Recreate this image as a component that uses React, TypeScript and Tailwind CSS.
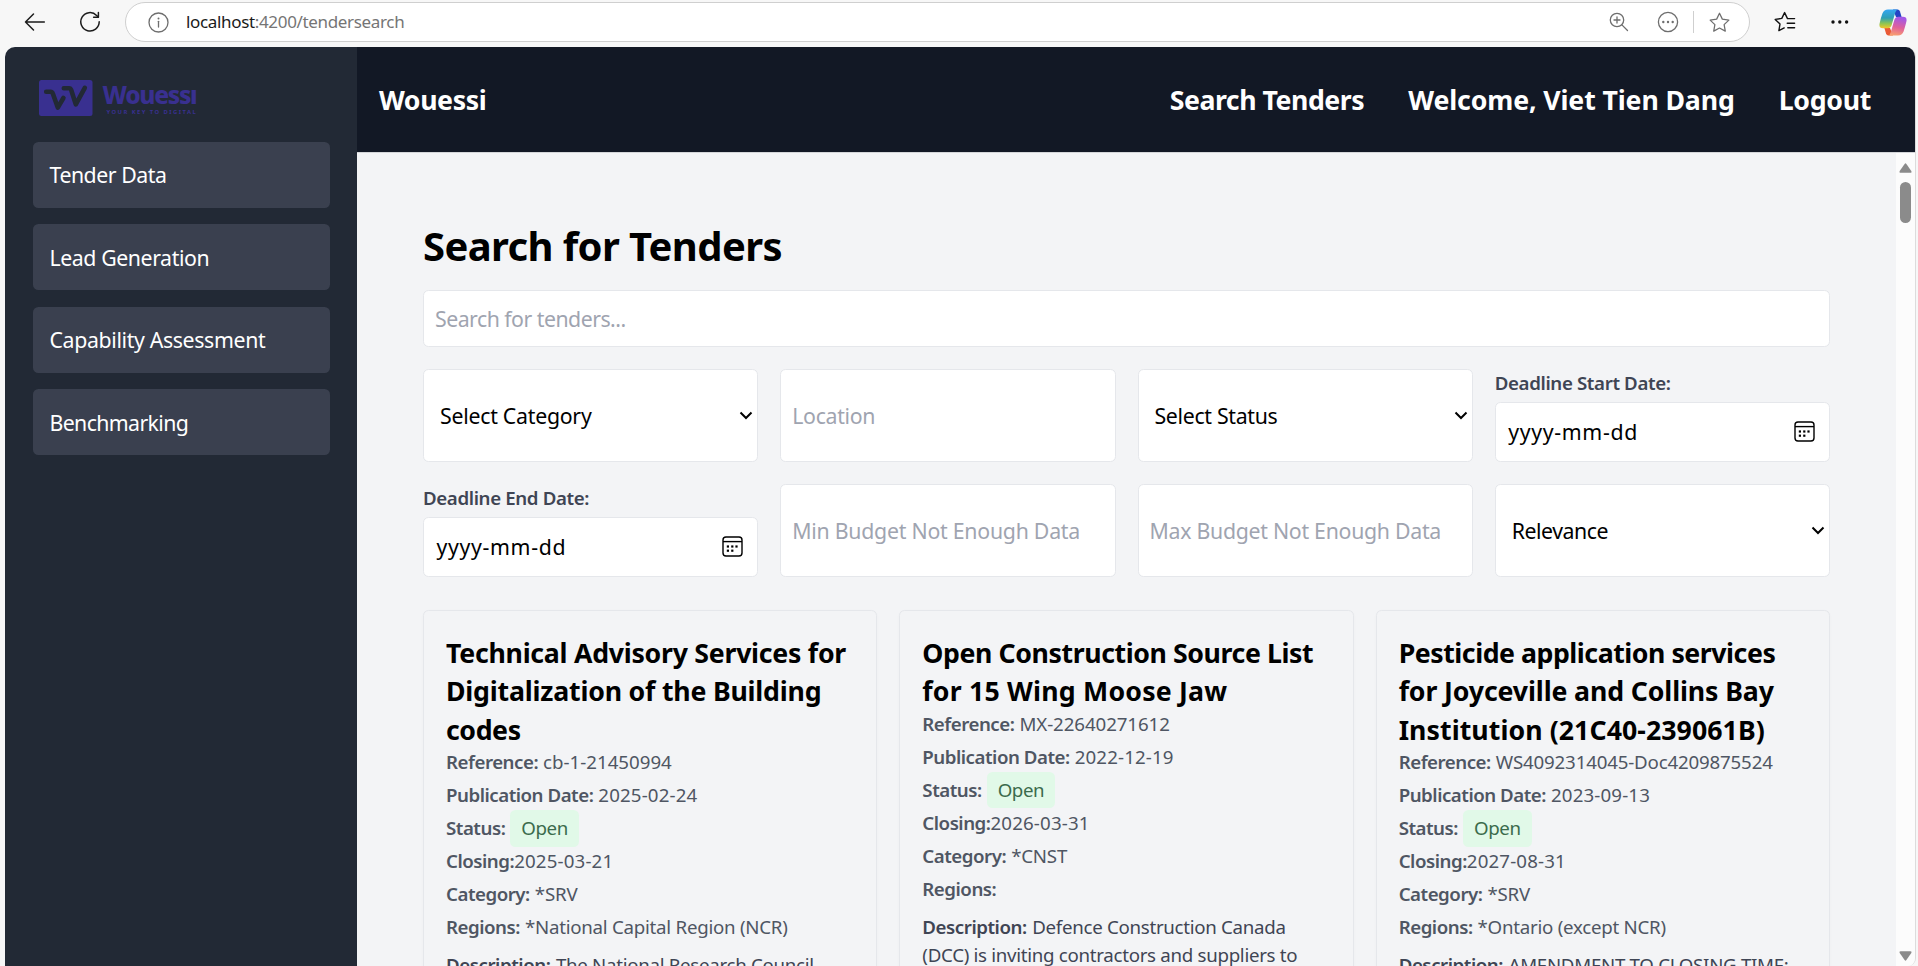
import type { ReactNode } from "react";

type Tender = {
  title: { text: string; tracking: string }[];
  reference: string;
  referenceTracking: string;
  published: string;
  closing: string;
  category: string;
  regions: string;
  description: string[];
};

const tenders: Tender[] = [
  {
    title: [
      { text: "Technical Advisory Services for", tracking: "tracking-[-0.26px]" },
      { text: "Digitalization of the Building", tracking: "tracking-[-0.2px]" },
      { text: "codes", tracking: "tracking-[-0.4px]" },
    ],
    reference: "cb-1-21450994",
    referenceTracking: "tracking-[0px]",
    published: "2025-02-24",
    closing: "2025-03-21",
    category: "*SRV",
    regions: "*National Capital Region (NCR)",
    description: ["The National Research Council"],
  },
  {
    title: [
      { text: "Open Construction Source List", tracking: "tracking-[-0.4px]" },
      { text: "for 15 Wing Moose Jaw", tracking: "tracking-[0.2px]" },
    ],
    reference: "MX-22640271612",
    referenceTracking: "tracking-[-0.08px]",
    published: "2022-12-19",
    closing: "2026-03-31",
    category: "*CNST",
    regions: "",
    description: ["Defence Construction Canada", "(DCC) is inviting contractors and suppliers to"],
  },
  {
    title: [
      { text: "Pesticide application services", tracking: "tracking-[-0.46px]" },
      { text: "for Joyceville and Collins Bay", tracking: "tracking-[-0.12px]" },
      { text: "Institution (21C40-239061B)", tracking: "tracking-[0.07px]" },
    ],
    reference: "WS4092314045-Doc4209875524",
    referenceTracking: "tracking-[-0.17px]",
    published: "2023-09-13",
    closing: "2027-08-31",
    category: "*SRV",
    regions: "*Ontario (except NCR)",
    description: ["AMENDMENT TO CLOSING TIME:"],
  },
];

const navItems = [
  { label: "Tender Data", tracking: "tracking-[-0.47px]" },
  { label: "Lead Generation", tracking: "tracking-[-0.42px]" },
  { label: "Capability Assessment", tracking: "tracking-[-0.36px]" },
  { label: "Benchmarking", tracking: "tracking-[-0.62px]" },
];

const STAR = "M10 1.2 12.7 6.8 18.9 7.7 14.4 12 15.5 18.2 10 15.3 4.5 18.2 5.6 12 1.1 7.7 7.3 6.8Z";

function BrowserBar() {
  return (
    <div className="flex h-[47px] shrink-0 items-start pt-[2px]">
      <svg className="mt-[9.5px] ml-[24px] h-[20px] w-[22px]" viewBox="0 0 22 20" fill="none" stroke="#1b1b1b" strokeWidth="1.5" strokeLinecap="round" strokeLinejoin="round">
        <path d="M20.3 10H1.5M9.5 2 1.5 10 9.5 18" />
      </svg>
      <svg className="mt-[9px] ml-[33px] h-[22px] w-[22px]" viewBox="0 0 22 22" fill="none" stroke="#1b1b1b" strokeWidth="1.5" strokeLinecap="round" strokeLinejoin="round">
        <path d="M20.2 10.8A9.2 9.2 0 1 1 17.6 4.4L19.2 6" />
        <path d="M19.4 1.6V6.2H14.6" />
      </svg>
      <div className="ml-[24px] flex h-[40px] w-[1625px] items-center rounded-full border border-[#cfcfcf] bg-white">
        <svg className="ml-[22px] h-[21px] w-[21px]" viewBox="0 0 21 21" fill="none" stroke="#6e6e6e" strokeWidth="1.3">
          <circle cx="10.5" cy="10.5" r="9.5" />
          <path d="M10.5 9.3V15" strokeLinecap="round" />
          <circle cx="10.5" cy="6.4" r="1" fill="#6e6e6e" stroke="none" />
        </svg>
        <span className="ml-[17px] text-[17px] tracking-[-0.34px] text-[#757575]">
          <span className="text-[#1a1a1a]">localhost</span>:4200/tendersearch
        </span>
        <div className="ml-auto flex items-center">
          <svg className="h-[20px] w-[20px]" viewBox="0 0 20 20" fill="none" stroke="#6e6e6e" strokeWidth="1.3" strokeLinecap="round">
            <circle cx="8" cy="8" r="6.7" />
            <path d="M12.9 12.9 18.5 18.5M8 5V11M5 8H11" />
          </svg>
          <svg className="ml-[28px] h-[22px] w-[22px]" viewBox="0 0 22 22" fill="none" stroke="#6e6e6e" strokeWidth="1.3">
            <circle cx="11" cy="11" r="9.6" />
            <g fill="#6e6e6e" stroke="none">
              <circle cx="6.3" cy="11" r="1.2" />
              <circle cx="11" cy="11" r="1.2" />
              <circle cx="15.7" cy="11" r="1.2" />
            </g>
          </svg>
          <div className="ml-[14px] h-[22px] w-px bg-[#cfcfcf]" />
          <svg className="ml-[15px] mr-[19px] h-[21px] w-[21px]" viewBox="0 0 20 20" fill="none" stroke="#6e6e6e" strokeWidth="1.2" strokeLinejoin="round">
            <path d={STAR} />
          </svg>
        </div>
      </div>
      <svg className="mt-[9px] ml-[24px] h-[22px] w-[22px]" viewBox="0 0 22 22" fill="none" stroke="#111" strokeWidth="1.4" strokeLinecap="round" strokeLinejoin="round">
        <path d="M13.5 7.6 10.6 1.6 7.8 7.4 1.2 8.4 6 13 4.9 19.6 10.2 16.9M13.5 7.6H20.6M13.2 12.2H20.6M13.8 16.7H20.6" />
      </svg>
      <svg className="mt-[17px] ml-[35px] h-[6px] w-[18px]" viewBox="0 0 18 6" fill="#111">
        <circle cx="2" cy="3" r="1.7" />
        <circle cx="8.8" cy="3" r="1.7" />
        <circle cx="15.6" cy="3" r="1.7" />
      </svg>
      <svg className="mt-[6.5px] ml-[30px] h-[27px] w-[28px]" viewBox="0 0 28 27">
        <defs>
          <linearGradient id="cpLeft" x1="0" y1="0" x2="0" y2="1">
            <stop offset="0" stopColor="#35a6f2" />
            <stop offset="0.45" stopColor="#2f9fb5" />
            <stop offset="0.75" stopColor="#8fc552" />
            <stop offset="1" stopColor="#f3c62a" />
          </linearGradient>
          <linearGradient id="cpRight" x1="0.3" y1="0" x2="0.1" y2="1">
            <stop offset="0" stopColor="#a458e6" />
            <stop offset="0.5" stopColor="#e0609b" />
            <stop offset="1" stopColor="#fba66a" />
          </linearGradient>
        </defs>
        <path d="M14 0.5H18.5Q20.4 0.5 21 2.4L22.6 8H17Z" fill="#2443c4" />
        <path d="M14 26.5H9.5Q7.6 26.5 7 24.6L5.4 19H11Z" fill="#ea5a36" />
        <path d="M9 0.5H19Q17 0.8 16.2 3.8L12.6 16.2Q11.6 19.2 8.6 19.2H4Q-0.4 19.2 0.6 14.4Q1.7 9.4 3.4 4.6Q5 0.5 9 0.5Z" fill="url(#cpLeft)" />
        <path d="M19 26.5H9Q11 26.2 11.8 23.2L15.4 10.8Q16.4 7.8 19.4 7.8H24Q28.4 7.8 27.4 12.6Q26.3 17.6 24.6 22.4Q23 26.5 19 26.5Z" fill="url(#cpRight)" />
      </svg>
    </div>
  );
}

function Logo() {
  return (
    <div className="flex h-[36px] items-start pl-[6px]">
      <svg className="h-[36px] w-[54px] shrink-0" viewBox="0 0 54 36" fill="none">
        <rect x="0" y="0" width="53.5" height="36" rx="2.5" fill="#393090" />
        <g stroke="#222935" strokeWidth="4.6" strokeLinecap="round" strokeLinejoin="round">
          <path d="M7.2 11.8H11.5Q13.3 11.8 13.9 13.8L18.8 27.6 24.4 18" />
          <path d="M24.8 8.2H30Q31.6 8.2 32.2 10L36.8 24.4 45.8 7.8" />
        </g>
      </svg>
      <div className="ml-[9.5px] flex flex-col whitespace-nowrap text-[#393090]">
        <span className="h-[28px] text-[24.5px] leading-[30px] font-extrabold tracking-[-1.3px]">Wouessı</span>
        <span className="pl-[4px] text-[5.8px] leading-[8px] font-bold tracking-[1.48px]">YOUR KEY TO DIGITAL</span>
      </div>
    </div>
  );
}

function Sidebar() {
  return (
    <aside className="flex w-[352px] shrink-0 flex-col bg-[#222935] px-[28px] pt-[33px]">
      <Logo />
      <nav className="mt-[25.6px] mr-[-1px] flex flex-col gap-[16.5px]">
        {navItems.map((item) => (
          <a
            key={item.label}
            className={`flex h-[66px] items-center rounded-[5.5px] bg-[#3a404f] pt-px pl-[16.5px] text-[21.3px] text-white ${item.tracking}`}
          >
            {item.label}
          </a>
        ))}
      </nav>
    </aside>
  );
}

function Header() {
  return (
    <header className="flex h-[105.5px] shrink-0 items-center justify-between border-b border-[#d4d6d9] bg-[#121825] pt-[2px] pr-[44px] pl-[22px] text-[26.7px] font-bold whitespace-nowrap text-white">
      <span className="tracking-[-0.4px]">Wouessi</span>
      <nav className="flex gap-[44px]">
        <a className="tracking-[-0.46px]">Search Tenders</a>
        <a className="tracking-[-0.12px]">Welcome, Viet Tien Dang</a>
        <a className="tracking-[-0.3px]">Logout</a>
      </nav>
    </header>
  );
}

const BOX = "flex items-center rounded-[5.5px] border border-[#e5e7eb] bg-white text-[21.3px]";

function Placeholder({ text, tracking }: { text: string; tracking: string }) {
  return <div className={`${BOX} pt-[2px] pl-[11px] whitespace-nowrap text-[#9fa4b0] ${tracking}`}>{text}</div>;
}

function SelectBox({ text, tracking }: { text: string; tracking: string }) {
  return (
    <div className={`${BOX} justify-between pr-[4px] pl-[16px] text-black ${tracking}`}>
      <span className="pt-[2px]">{text}</span>
      <svg className="h-[9px] w-[14px]" viewBox="0 0 14 9" fill="none" stroke="#000" strokeWidth="2">
        <path d="M1.5 1.5 7 7 12.5 1.5" />
      </svg>
    </div>
  );
}

function DateBox({ label }: { label: string }) {
  return (
    <div className="flex flex-col">
      <span className="h-[33px] text-[18.7px] leading-[27.5px] font-semibold tracking-[-0.37px] text-[#3f4554]">{label}</span>
      <div className={`${BOX} flex-1 justify-between pr-[14px] pl-[12.5px] tracking-[0.65px] text-black`}>
        yyyy-mm-dd
        <svg className="h-[21px] w-[21px]" viewBox="0 0 21 21" fill="none" stroke="#000" strokeWidth="1.4">
          <rect x="1" y="1" width="19" height="19" rx="3" />
          <path d="M1 5.6H20" />
          <g fill="#000" stroke="none">
            <rect x="4.8" y="9.4" width="2.2" height="2.2" />
            <rect x="9.2" y="9.4" width="2.2" height="2.2" />
            <rect x="13.4" y="9.4" width="2.2" height="2.2" />
            <rect x="4.8" y="13.6" width="2.2" height="2.2" />
            <rect x="9.2" y="13.6" width="2.2" height="2.2" />
          </g>
        </svg>
      </div>
    </div>
  );
}

function Row({ label, children, tight }: { label: string; children?: ReactNode; tight?: boolean }) {
  return (
    <div className={tight ? "flex h-[27.5px] items-center" : "flex h-[27.5px] items-center gap-[5px]"}>
      <span className="font-semibold tracking-[-0.48px]">{label}</span>
      {children}
    </div>
  );
}

function TenderCard({ tender }: { tender: Tender }) {
  return (
    <article className="flex-1 rounded-[5.5px] border border-[#e5e7eb] px-[22px] pt-[23px] pb-[22px] text-[18.7px] whitespace-nowrap text-[#4f5663] shadow-[0_1px_3px_rgba(0,0,0,0.03)]">
      <h2 className="text-[26.7px] leading-[38.5px] font-bold text-black">
        {tender.title.map((line) => (
          <span key={line.text} className={`block ${line.tracking}`}>
            {line.text}
          </span>
        ))}
      </h2>
      <div className="mt-[-0.5px] flex flex-col gap-[5.5px]">
        <Row label="Reference:">
          <span className={tender.referenceTracking}>{tender.reference}</span>
        </Row>
        <Row label="Publication Date:">
          <span className="tracking-[0.15px]">{tender.published}</span>
        </Row>
        <Row label="Status:">
          <span className="flex h-[36.5px] shrink-0 items-center rounded-[5.5px] bg-[#e1f9e8] px-[11px] tracking-[-0.4px] text-[#3b6b4c]">Open</span>
        </Row>
        <Row label="Closing:" tight>
          <span className="tracking-[0.15px]">{tender.closing}</span>
        </Row>
        <Row label="Category:">
          <span className="tracking-[-0.2px]">{tender.category}</span>
        </Row>
        <Row label="Regions:">
          <span className="tracking-[-0.25px]">{tender.regions}</span>
        </Row>
      </div>
      <p className="mt-[10px] leading-[28px] tracking-[-0.29px] text-[#3f4554]">
        <span className="mr-[5.5px] font-semibold tracking-[-0.45px]">Description:</span>
        {tender.description.map((line, i) => (
          <span key={line} className={i === 0 ? "" : "block"}>
            {line}
          </span>
        ))}
      </p>
    </article>
  );
}

function Scrollbar() {
  return (
    <div className="flex w-[19px] shrink-0 flex-col items-center bg-[#fcfcfc] pt-[10px] pb-[5px]">
      <svg className="h-[10px] w-[13px]" viewBox="0 0 13 10" fill="#8b8b8b">
        <path d="M5.6 0.9Q6.5 -0.3 7.4 0.9L12.3 8Q13 9.8 11.4 9.8H1.6Q0 9.8 0.7 8Z" />
      </svg>
      <div className="mt-[9px] h-[41px] w-[11px] rounded-full bg-[#8b8b8b]" />
      <svg className="mt-auto h-[10px] w-[13px]" viewBox="0 0 13 10" fill="#8b8b8b">
        <path d="M5.6 9.1Q6.5 10.3 7.4 9.1L12.3 2Q13 0.2 11.4 0.2H1.6Q0 0.2 0.7 2Z" />
      </svg>
    </div>
  );
}

export default function App() {
  return (
    <div className="flex h-screen w-screen flex-col overflow-hidden bg-[#f7f7f7] font-['Noto_Sans','Open_Sans',sans-serif]">
      <BrowserBar />
      <div className="mr-[2px] ml-[5px] flex min-h-0 flex-1 overflow-hidden rounded-t-[10px] rounded-br-[8px] border-r border-[#dcdcdc] bg-[#f3f4f6]">
        <Sidebar />
        <div className="flex min-w-0 flex-1 flex-col">
          <Header />
          <div className="flex min-h-0 flex-1">
            <main className="min-w-0 flex-1 overflow-hidden px-[66px] pt-[66px]">
              <h1 className="h-[71px] text-[40px] leading-[54px] font-bold tracking-[-0.62px] text-black">Search for Tenders</h1>
              <div className={`${BOX} h-[57px] pt-[2px] pl-[11px] tracking-[-0.52px] text-[#9fa4b0]`}>Search for tenders...</div>
              <div className="mt-[22px] grid grid-cols-4 grid-rows-[93px_93px] gap-[22px]">
                <SelectBox text="Select Category" tracking="tracking-[-0.26px]" />
                <Placeholder text="Location" tracking="tracking-[-0.33px]" />
                <SelectBox text="Select Status" tracking="tracking-[-0.32px]" />
                <DateBox label="Deadline Start Date:" />
                <DateBox label="Deadline End Date:" />
                <Placeholder text="Min Budget Not Enough Data" tracking="tracking-[-0.25px]" />
                <Placeholder text="Max Budget Not Enough Data" tracking="tracking-[-0.28px]" />
                <SelectBox text="Relevance" tracking="tracking-[-0.47px]" />
              </div>
              <div className="mt-[33px] flex items-stretch gap-[22px] pb-[40px]">
                {tenders.map((tender) => (
                  <TenderCard key={tender.reference} tender={tender} />
                ))}
              </div>
            </main>
            <Scrollbar />
          </div>
        </div>
      </div>
    </div>
  );
}
